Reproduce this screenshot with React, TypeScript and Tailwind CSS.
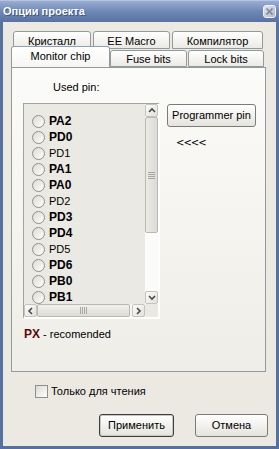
import React from "react";

const font = { fontFamily: '"Liberation Sans", Arial, sans-serif' };

const items: [string, boolean][] = [
  ["PA2", true],
  ["PD0", true],
  ["PD1", false],
  ["PA1", true],
  ["PA0", true],
  ["PD2", false],
  ["PD3", true],
  ["PD4", true],
  ["PD5", false],
  ["PD6", true],
  ["PB0", true],
  ["PB1", true],
];

function Chevron({ dir }: { dir: "up" | "down" | "left" | "right" }) {
  const d =
    dir === "up"
      ? "M1 5 L4 2 L7 5"
      : dir === "down"
      ? "M1 2 L4 5 L7 2"
      : dir === "left"
      ? "M5 1 L2 4 L5 7"
      : "M2 1 L5 4 L2 7";
  return (
    <svg width="8" height="8" viewBox="0 0 8 8">
      <path d={d} fill="none" stroke="#4a4a4a" strokeWidth="1.6" />
    </svg>
  );
}

function ScrollBtn({ dir }: { dir: "up" | "down" | "left" | "right" }) {
  return (
    <div className="w-[13px] h-[13px] shrink-0 border border-[#c4c3bd] rounded-[2px] bg-gradient-to-br from-[#fbfbf9] to-[#e2e1db] flex items-center justify-center">
      <Chevron dir={dir} />
    </div>
  );
}

function Tab({
  label,
  w,
  h,
  selected,
  pt,
}: {
  label: string;
  w: number;
  h: number;
  selected?: boolean;
  pt: number;
}) {
  return (
    <div
      className={
        "shrink-0 border border-[#919b9c] rounded-t-[3px] text-[11px] text-black text-center leading-[13px] " +
        (selected
          ? "border-b-0 border-t-[#8e9fb8] bg-gradient-to-b from-[#ffffff] to-[#f6f5f2] relative z-20"
          : "bg-gradient-to-b from-[#ffffff] to-[#ebeae5]")
      }
      style={{ width: w, height: h, paddingTop: pt }}
    >
      {label}
    </div>
  );
}

export default function App() {
  return (
    <div
      className="w-[279px] h-[449px] flex flex-col bg-[#56709f] select-none"
      style={font}
    >
      {/* Title bar */}
      <div className="h-[22px] shrink-0 flex items-center justify-between pl-[3px] pr-[3px] bg-gradient-to-b from-[#9aaed2] via-[#6f87b5] to-[#5a72a2] border-t border-[#b6c4e0]">
        <span className="text-white font-bold text-[11px] leading-none [text-shadow:1px_1px_0_#3e5583]">
          Опции проекта
        </span>
        <div className="w-[13px] h-[13px] rounded-[3px] border border-[#f2f4f8] bg-gradient-to-br from-[#dfe3ea] to-[#b3bac8] flex items-center justify-center">
          <svg width="9" height="9" viewBox="0 0 9 9">
            <path d="M1.5 1.5 L7.5 7.5 M7.5 1.5 L1.5 7.5" stroke="#7c8496" strokeWidth="1.6" />
          </svg>
        </div>
      </div>

      {/* Client area */}
      <div className="flex-1 flex flex-col bg-[#ece9e2] ml-[3px] mr-[3px] mb-[3px] pt-[9px]">
        {/* Tabs row 1 */}
        <div className="h-[16px] flex gap-[2px] ml-[10px] relative z-0">
          <Tab label="Кристалл" w={78} h={18} pt={3} />
          <Tab label="EE Macro" w={77} h={18} pt={3} />
          <Tab label="Компилятор" w={91} h={18} pt={3} />
        </div>
        {/* Tabs row 2 */}
        <div className="h-[20px] flex items-end ml-[8px] relative z-10">
          <Tab label="Monitor chip" w={99} h={21} selected pt={3} />
          <Tab label="Fuse bits" w={77} h={17} pt={2} />
          <div className="w-[1px]" />
          <Tab label="Lock bits" w={76} h={17} pt={2} />
        </div>

        {/* Panel */}
        <div className="h-[305px] ml-[8px] mr-[10px] border border-[#919b9c] bg-gradient-to-b from-[#fbfbf9] to-[#efede7] relative z-0 flex flex-col">
          <div className="h-[13px] mt-[13px] ml-[41px] text-[11px] leading-[13px] text-black">
            Used pin:
          </div>
          <div className="flex mt-[9px] ml-[11px]">
            {/* List box */}
            <div className="w-[137px] h-[216px] border-t border-l border-[#a3a29d] border-r-2 border-b-2 border-r-white border-b-white bg-[#ebe9e3] grid grid-cols-[1fr_13px] grid-rows-[1fr_13px]">
              <div className="overflow-hidden pt-[9px] pl-[8px]">
                {items.map(([name, bold]) => (
                  <div key={name} className="h-[16px] flex items-center gap-[4px]">
                    <span className="w-[13px] h-[13px] rounded-full border border-[#8f8f8c] bg-gradient-to-br from-[#dcdbd5] to-[#ffffff] shrink-0" />
                    <span
                      className={
                        bold
                          ? "text-[12px] font-bold text-black leading-none"
                          : "text-[11px] text-black leading-none"
                      }
                    >
                      {name}
                    </span>
                  </div>
                ))}
              </div>
              {/* vertical scrollbar */}
              <div className="flex flex-col bg-[#fbfbf9]">
                <ScrollBtn dir="up" />
                <div className="h-[116px] border border-[#b9b8b2] rounded-[2px] bg-gradient-to-r from-[#ecebe6] to-[#dcdbd5] flex flex-col items-center justify-center gap-[1px]">
                  <div className="w-[7px] h-[1px] bg-[#a8a7a2]" />
                  <div className="w-[7px] h-[1px] bg-[#a8a7a2]" />
                  <div className="w-[7px] h-[1px] bg-[#a8a7a2]" />
                  <div className="w-[7px] h-[1px] bg-[#a8a7a2]" />
                </div>
                <div className="flex-1" />
                <ScrollBtn dir="down" />
              </div>
              {/* horizontal scrollbar */}
              <div className="flex bg-[#f6f5f1]">
                <ScrollBtn dir="left" />
                <div className="flex-1 mr-[2px] border border-[#b9b8b2] rounded-[2px] bg-gradient-to-b from-[#f1f0ec] to-[#dedcd6] flex items-center justify-center gap-[1px]">
                  <div className="w-[1px] h-[7px] bg-[#a8a7a2]" />
                  <div className="w-[1px] h-[7px] bg-[#a8a7a2]" />
                  <div className="w-[1px] h-[7px] bg-[#a8a7a2]" />
                  <div className="w-[1px] h-[7px] bg-[#a8a7a2]" />
                </div>
                <ScrollBtn dir="right" />
              </div>
              <div className="bg-[#ebe9e3]" />
            </div>

            {/* Right column */}
            <div className="flex flex-col items-start ml-[7px] pt-[1px]">
              <button className="w-[89px] h-[23px] rounded-[3px] border border-[#7b7b78] bg-gradient-to-b from-[#ffffff] to-[#e4e3dd] text-[11px] text-black leading-none">
                Programmer pin
              </button>
              <span className="inline-block whitespace-nowrap ml-[9px] mt-[10px] text-[10px] leading-[12px] text-black [font-family:'DejaVu_Sans',sans-serif] tracking-[-1px]">
                {"<<<<"}
              </span>
            </div>
          </div>
          <div className="mt-[6px] ml-[12px] flex items-baseline">
            <span className="text-[12px] font-bold text-[#5c0a0a]">PX</span>
            <span className="text-[11px] text-black">&nbsp;- recomended</span>
          </div>
        </div>

        {/* Checkbox */}
        <div className="mt-[13px] ml-[32px] h-[13px] flex items-center gap-[3px]">
          <span className="w-[13px] h-[13px] border border-[#8f8f8c] bg-gradient-to-br from-[#dcdbd5] to-[#ffffff]" />
          <span className="text-[11px] text-black leading-none">Только для чтения</span>
        </div>

        {/* Buttons */}
        <div className="mt-[16px] flex justify-end gap-[21px] mr-[8px]">
          <button className="w-[75px] h-[23px] rounded-[3px] border border-[#3d3d3b] bg-gradient-to-b from-[#ffffff] to-[#e4e3dd] shadow-[inset_0_0_0_1px_#c9c8c2] text-[11px] text-black leading-none">
            Применить
          </button>
          <button className="w-[73px] h-[23px] rounded-[3px] border border-[#7b7b78] bg-gradient-to-b from-[#ffffff] to-[#e4e3dd] text-[11px] text-black leading-none">
            Отмена
          </button>
        </div>
      </div>
    </div>
  );
}
